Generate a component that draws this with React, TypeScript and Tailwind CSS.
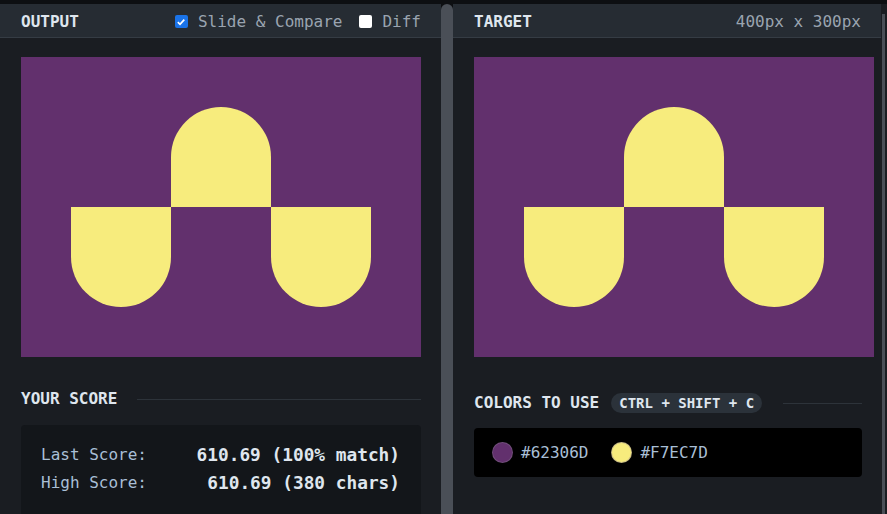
import React from 'react';

const PURPLE = '#62306D';
const YELLOW = '#F7EC7D';

function Artwork() {
  return (
    <div className="w-[400px] h-[300px] shrink-0 bg-[#62306D] relative">
      <div className="absolute left-[150px] top-[50px] w-[100px] h-[100px] bg-[#F7EC7D] rounded-t-[50px]" />
      <div className="absolute left-[50px] top-[150px] w-[100px] h-[100px] bg-[#F7EC7D] rounded-b-[50px]" />
      <div className="absolute left-[250px] top-[150px] w-[100px] h-[100px] bg-[#F7EC7D] rounded-b-[50px]" />
    </div>
  );
}

function PanelHeader({ title, children }: { title: string; children?: React.ReactNode }) {
  return (
    <div className="h-[34px] shrink-0 bg-[#262c33] border-b border-[#353c44] flex items-center justify-between pl-[21px] pr-[20px] pt-[2px]">
      <span className="font-bold text-[16px] leading-[20px] text-[#dfe6ee]">{title}</span>
      {children}
    </div>
  );
}

function Swatch({ color }: { color: string }) {
  return (
    <div className="flex items-center gap-[8px]">
      <span className="w-[21px] h-[21px] rounded-full border border-[#8a7a90]/40" style={{ backgroundColor: color }} />
      <span className="text-[16px] text-[#a9bfd6]">{color}</span>
    </div>
  );
}

export default function App() {
  return (
    <div
      className="w-[887px] h-[514px] overflow-hidden bg-[#0d0f12] pt-[4px] flex"
      style={{ fontFamily: '"DejaVu Sans Mono", "Liberation Mono", monospace' }}
    >
      <section className="w-[441px] shrink-0 bg-[#1a1d22] flex flex-col">
        <PanelHeader title="OUTPUT">
          <div className="flex items-center text-[16px] leading-[20px] text-[#9aa4b0]">
            <span className="w-[13px] h-[13px] rounded-[2px] bg-[#1a73e8] flex items-center justify-center mr-[10px]">
              <svg width="10" height="10" viewBox="0 0 10 10">
                <path d="M1.8 5.2 L4 7.3 L8.3 2.6" fill="none" stroke="white" strokeWidth="1.7" />
              </svg>
            </span>
            <span>Slide &amp; Compare</span>
            <span className="w-[13px] h-[13px] rounded-[2px] bg-white ml-[17px] mr-[10px]" />
            <span>Diff</span>
          </div>
        </PanelHeader>
        <div className="pl-[21px] pt-[19px]">
          <Artwork />
        </div>
        <div className="pl-[21px] pr-[20px] mt-[32px] h-[20px] flex items-center gap-[20px]">
          <span className="font-bold text-[16px] leading-[20px] text-[#dfe6ee]">YOUR SCORE</span>
          <div className="flex-1 h-px bg-[#2d333a]" />
        </div>
        <div className="ml-[21px] mr-[20px] mt-[16px] flex-1 bg-[#13161a] rounded-t-[4px] pl-[20px] pr-[21px] pt-[19px] flex flex-col gap-[6px]">
          <div className="flex items-center justify-between h-[22px]">
            <span className="text-[16px] text-[#a9bfd6]">Last Score:</span>
            <span className="text-[17.8px] font-bold text-[#dfe6ee]">610.69 (100% match)</span>
          </div>
          <div className="flex items-center justify-between h-[22px]">
            <span className="text-[16px] text-[#a9bfd6]">High Score:</span>
            <span className="text-[17.8px] font-bold text-[#dfe6ee]">610.69 (380 chars)</span>
          </div>
        </div>
      </section>

      <div className="w-[12px] shrink-0 bg-[#4a4f57] rounded-t-[6px]" />

      <section className="w-[428px] shrink-0 bg-[#1a1d22] flex flex-col">
        <PanelHeader title="TARGET">
          <span className="text-[16px] leading-[20px] text-[#9aa4b0]">400px x 300px</span>
        </PanelHeader>
        <div className="pl-[21px] pt-[19px]">
          <Artwork />
        </div>
        <div className="pl-[21px] pr-[19px] mt-[36px] h-[20px] flex items-center">
          <span className="font-bold text-[16px] leading-[20px] text-[#dfe6ee]">COLORS TO USE</span>
          <span className="ml-[12px] h-[20px] px-[8px] rounded-full bg-[#2b323a] flex items-center font-bold text-[14px] leading-[20px] text-[#dfe6ee]">
            CTRL + SHIFT + C
          </span>
          <div className="ml-[21px] flex-1 h-px bg-[#2d333a]" />
        </div>
        <div className="ml-[21px] mr-[19px] mt-[15px] h-[49px] bg-black rounded-[4px] pl-[18px] flex items-center gap-[23px]">
          <Swatch color={PURPLE} />
          <Swatch color={YELLOW} />
        </div>
      </section>

      <div className="w-[6px] shrink-0 bg-[#1a1d22] flex">
        <div className="w-[3px] ml-[1px] bg-[#4a4f57] mt-[10px]" />
      </div>
    </div>
  );
}
